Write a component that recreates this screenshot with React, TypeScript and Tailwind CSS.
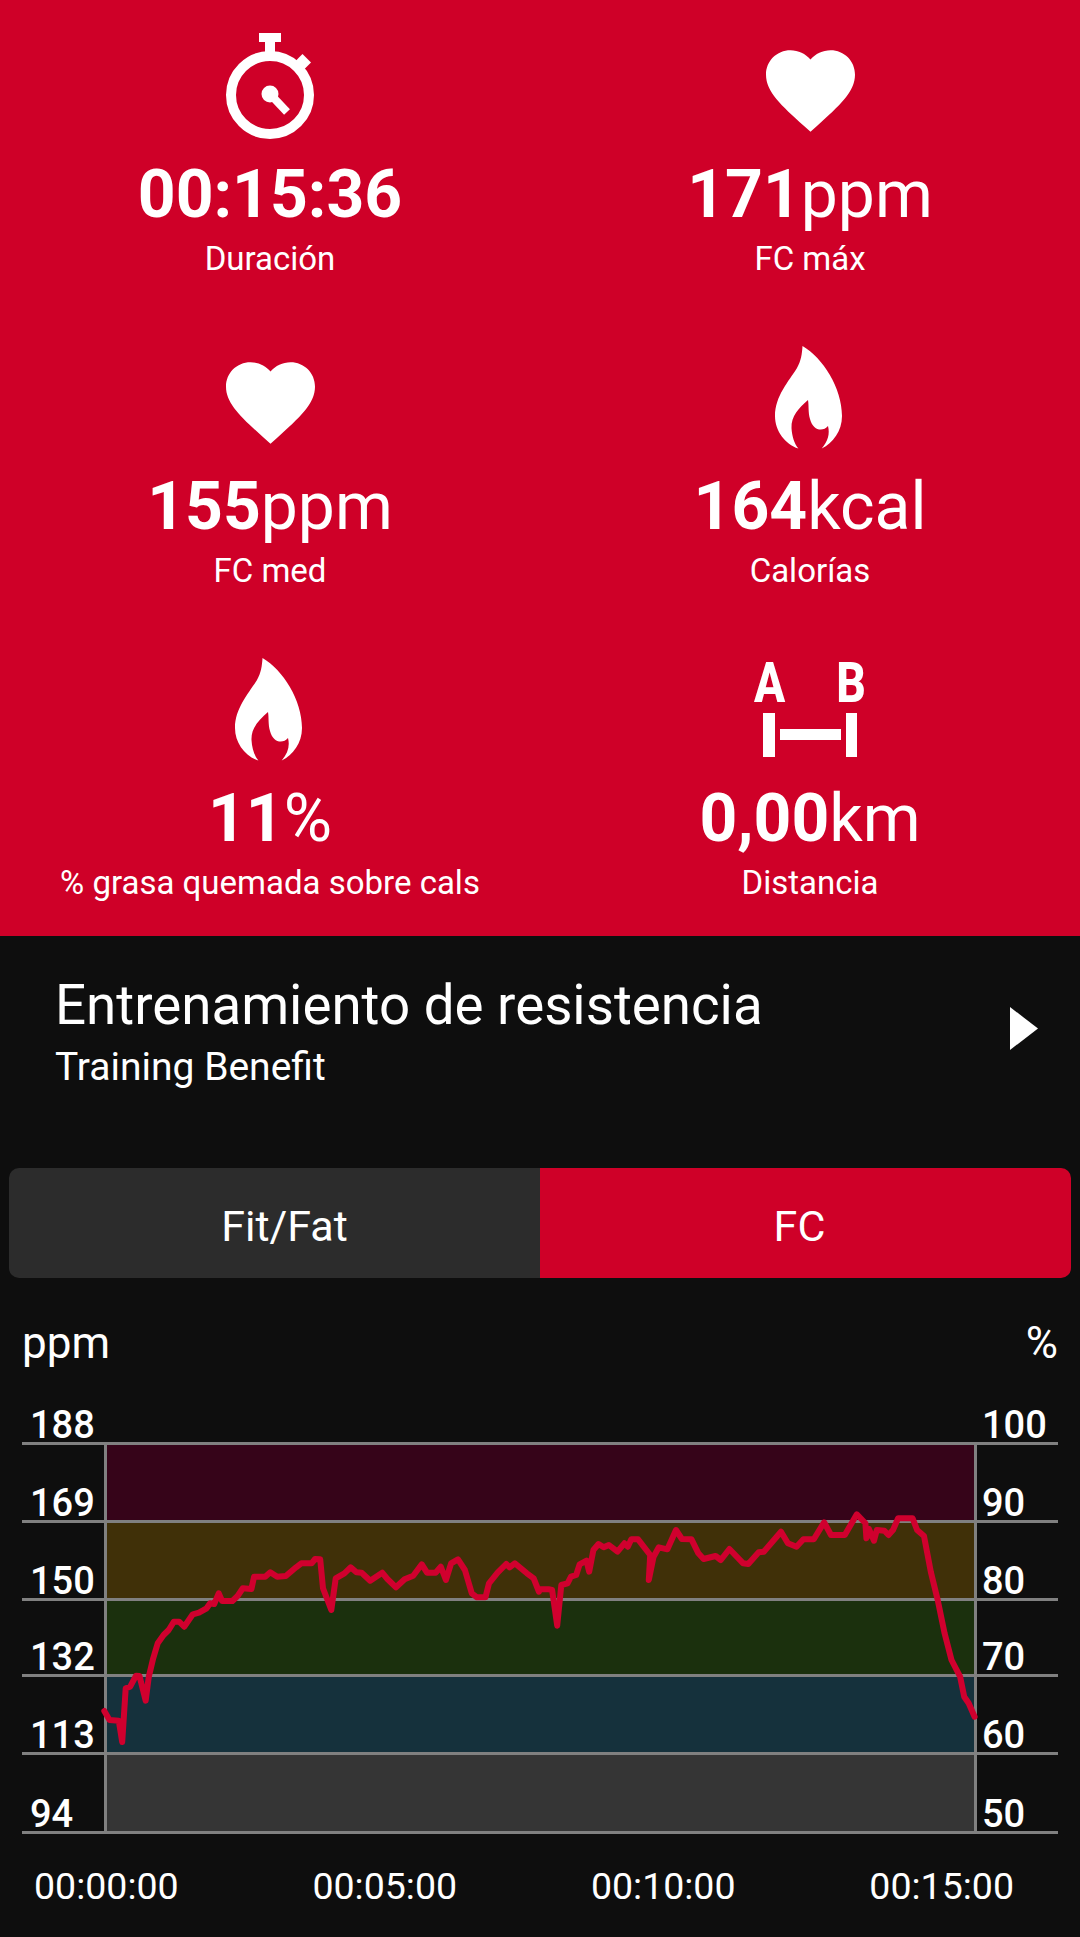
import type { ReactNode } from 'react';

const RED = 'bg-[#cf0028]';

// traced from the reference, split at x=540 because the two halves were read separately
const leftTrace = [
  [303, 843], [318, 870], [345, 872], [355, 936], [365, 775], [378, 770], [395, 737], [405, 738], [423, 812], [432, 740],
  [445, 685], [458, 640], [475, 615], [490, 600], [505, 575], [520, 575], [535, 590], [560, 553], [578, 548], [600, 535],
  [610, 520], [622, 522], [635, 490], [645, 513], [675, 513], [690, 498], [705, 475], [730, 477], [738, 440], [770, 440],
  [785, 427], [805, 440], [830, 438], [860, 412], [875, 400], [905, 400], [915, 387], [930, 388], [938, 475], [962, 540],
  [975, 445], [1000, 430], [1018, 412], [1035, 427], [1050, 428], [1075, 452], [1110, 428], [1125, 447], [1150, 472],
  [1175, 448], [1200, 437], [1225, 403], [1240, 428], [1265, 428], [1280, 410], [1295, 450], [1310, 400], [1330, 388],
  [1350, 420], [1370, 490], [1385, 502], [1410, 502], [1420, 460], [1445, 428], [1470, 402], [1480, 412], [1495, 400],
  [1530, 430], [1550, 445], [1565, 485],
];
const rightTrace = [
  [0, 478], [25, 478], [35, 480], [50, 587], [62, 465], [80, 460], [90, 440], [105, 435], [115, 403], [135, 392], [143, 425],
  [155, 360], [170, 342], [185, 352], [200, 345], [225, 365], [245, 340], [255, 350], [265, 328], [285, 328], [320, 375],
  [316, 450], [330, 380], [345, 352], [370, 358], [395, 300], [412, 327], [440, 328], [460, 370], [475, 387], [510, 378],
  [525, 390], [550, 357], [590, 400], [605, 402], [635, 367], [650, 365], [700, 305], [720, 340], [745, 350], [765, 328],
  [795, 328], [825, 277], [845, 315], [885, 315], [920, 253], [945, 280], [948, 325], [955, 297], [970, 332], [978, 300],
  [1000, 302], [1012, 315], [1025, 300], [1040, 265], [1082, 265], [1095, 300], [1115, 318], [1135, 425], [1155, 510],
  [1175, 610], [1195, 690], [1220, 740], [1232, 800], [1245, 820], [1262, 860],
];
const hrPoints = [
  ...leftTrace.map(([x, y]) => `${(x / 2.904).toFixed(1)},${(1430 + y / 3).toFixed(1)}`),
  ...rightTrace.map(([x, y]) => `${(540 + x / 2.904).toFixed(1)},${(1430 + y / 3).toFixed(1)}`),
].join(' ');

const Stopwatch = () => (
  <svg width="100" height="106" viewBox="0 0 100 106" fill="none">
    <rect x="39" y="0" width="22" height="9" fill="#fff" />
    <rect x="45" y="8" width="10" height="12" fill="#fff" />
    <circle cx="50" cy="62" r="39" stroke="#fff" strokeWidth="10" />
    <rect x="44" y="10" width="12" height="12" fill="#fff" transform="rotate(45 50 62)" />
    <circle cx="50" cy="61" r="8.5" fill="#fff" />
    <path d="M50 61 L67 79" stroke="#fff" strokeWidth="8" />
  </svg>
);

const Heart = () => (
  <svg width="89" height="82" viewBox="2 3 20 18.35" className="mt-[11px]" fill="#fff">
    <path d="M12 21.35l-1.45-1.32C5.4 15.36 2 12.28 2 8.5 2 5.42 4.42 3 7.5 3c1.74 0 3.41.81 4.5 2.09C13.09 3.81 14.76 3 16.5 3 19.58 3 22 5.42 22 8.5c0 3.78-3.4 6.86-8.55 11.54L12 21.35z" />
  </svg>
);

const Flame = () => (
  <svg width="67" height="103" viewBox="0 0 67 103" className="mr-[3px]" fill="#fff">
    <path d="M27.5 0C48 12 67 42 67 70C67 85 58 97 46.7 102.6C53 95 55 88 53 80C48 86 38 85 35 73C33 66 34 60 33 54C24 62 16 70 16.5 82C17 90 19 97 23.4 102.6C10 98 0 85 0 70C0 50 14 35 22 22C26 15 27 8 27.5 0Z" />
  </svg>
);

const DistanceIcon = () => (
  <svg width="118" height="106" viewBox="0 0 118 106" className="-mr-[6px] -mt-[10px]" fill="#fff">
    <text x="0" y="50" fontFamily="Roboto, sans-serif" fontWeight="800" fontSize="55" transform="scale(0.84 1)">A</text>
    <text x="98" y="50" fontFamily="Roboto, sans-serif" fontWeight="800" fontSize="55" transform="scale(0.84 1)">B</text>
    <rect x="9" y="61" width="12" height="44" />
    <rect x="26" y="77" width="61" height="11" />
    <rect x="92" y="61" width="11" height="44" />
  </svg>
);

const Stat = ({ icon, value, unit, label }: { icon: ReactNode; value: string; unit?: string; label: string }) => (
  <div className="flex h-[312px] flex-col items-center pt-[33px] text-white">
    <div className="flex h-[105px] items-center justify-center">{icon}</div>
    <p className="mt-[24px] text-[66px] leading-[66px]">
      <span className="font-bold">{value}</span>
      {unit}
    </p>
    <p className="mt-[13px] text-[33px] leading-[36px]">{label}</p>
  </div>
);

const rows = [
  { left: '169', right: '90', band: 'bg-[#360419]', height: 'h-[78px]' },
  { left: '150', right: '80', band: 'bg-[#403008]', height: 'h-[78px]' },
  { left: '132', right: '70', band: 'bg-[#1b300d]', height: 'h-[76px]' },
  { left: '113', right: '60', band: 'bg-[#15313c]', height: 'h-[78px]' },
  { left: '94', right: '50', band: 'bg-[#353535]', height: 'h-[79px]' },
];

const App = () => {
  return (
    <div className="h-[1937px] w-[1080px] overflow-hidden bg-[#0e0e0e] font-[Roboto,sans-serif] text-white">
      <div className={`grid h-[936px] grid-cols-2 ${RED}`}>
        <Stat icon={<Stopwatch />} value="00:15:36" label="Duración" />
        <Stat icon={<Heart />} value="171" unit="ppm" label="FC máx" />
        <Stat icon={<Heart />} value="155" unit="ppm" label="FC med" />
        <Stat icon={<Flame />} value="164" unit="kcal" label="Calorías" />
        <Stat icon={<Flame />} value="11" unit="%" label="% grasa quemada sobre cals" />
        <Stat icon={<DistanceIcon />} value="0,00" unit="km" label="Distancia" />
      </div>

      <div className="flex h-[232px] items-start justify-between pl-[55px] pr-[42px] pt-[37px]">
        <div>
          <p className="text-[54.7px] leading-[64px]">Entrenamiento de resistencia</p>
          <p className="mt-[7px] text-[39px] leading-[46px]">Training Benefit</p>
        </div>
        <svg width="28" height="43" viewBox="0 0 28 43" className="mt-[34px]" fill="#fff">
          <polygon points="0,0 28,21.5 0,43" />
        </svg>
      </div>

      <div className="mx-[9px] flex h-[110px] overflow-hidden rounded-[10px] text-[43px]">
        <div className="flex w-[531px] items-center justify-center bg-[#2c2c2c] pl-[20px] pt-[6px]">Fit/Fat</div>
        <div className={`flex flex-1 items-center justify-center pr-[12px] pt-[6px] ${RED}`}>FC</div>
      </div>

      <div className="mx-[22px] flex h-[99px] justify-between pt-[41px] text-[44px] leading-[48px]">
        <span>ppm</span>
        <span>%</span>
      </div>

      <div className="relative mx-[22px] text-[38px] font-medium leading-[34px]">
        <div className="flex h-[68px] items-end border-b-[3px] border-[#808080]">
          <span className="w-[82px] pl-[8px]">188</span>
          <span className="ml-auto w-[76px]">100</span>
        </div>
        {rows.map((row) => (
          <div key={row.left} className={`flex items-end border-b-[3px] border-[#808080] ${row.height}`}>
            <span className="w-[82px] pl-[8px]">{row.left}</span>
            <div className={`h-full w-[873px] border-x-[3px] border-[#808080] ${row.band}`} />
            <span className="pl-[5px]">{row.right}</span>
          </div>
        ))}
        <svg className="pointer-events-none absolute inset-0 h-full w-full" viewBox="22 1377 1036 457" fill="none">
          <polyline points={hrPoints} stroke="#d0002e" strokeWidth="6" strokeLinejoin="round" strokeLinecap="round" />
        </svg>
      </div>

      <div className="mt-[33px] flex justify-between pl-[34px] pr-[66px] text-[37.5px] leading-[38px]">
        <span>00:00:00</span>
        <span>00:05:00</span>
        <span>00:10:00</span>
        <span>00:15:00</span>
      </div>
    </div>
  );
};

export default App;
